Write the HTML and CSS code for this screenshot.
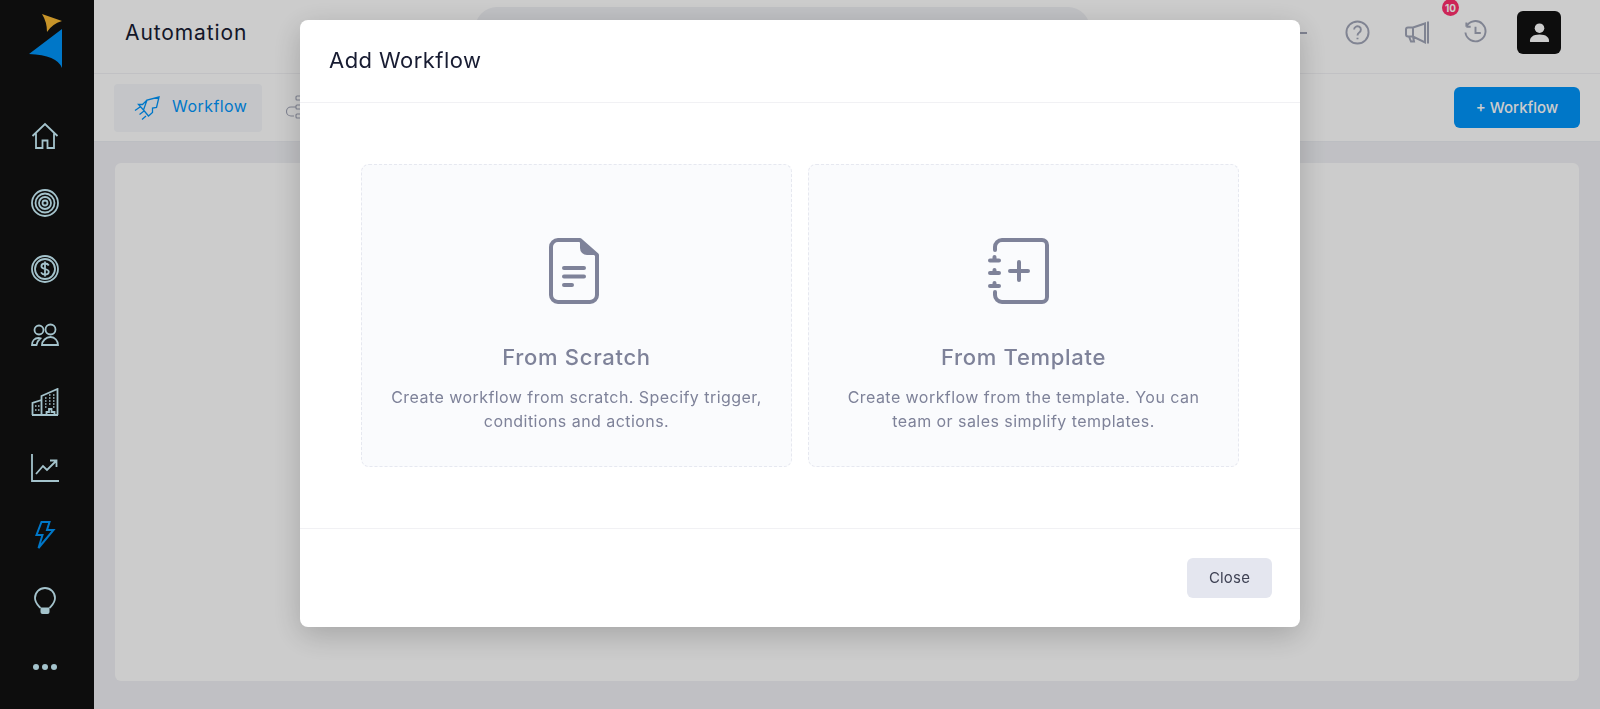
FILE: index.html
```html
<!DOCTYPE html>
<html lang="en">
<head>
<meta charset="utf-8">
<title>Automation</title>
<link rel="stylesheet" href="styles.css">
</head>
<body>
<div class="app">
  <aside class="sidebar">
    <svg class="logo" viewBox="0 0 36 56" width="36" height="56">
      <path class="logo-gold" d="M14 1 L34 8 Q24 11 19 19 Q19 9 14 1Z"/>
      <path class="logo-blue" d="M1 41 L34 16 L34 55 Q29 42 1 41Z"/>
    </svg>
    <nav class="nav">
      <a class="nav-item"><svg class="ico" viewBox="0 0 28 28"><path d="M1.500 14 14 2 26.500 14M5 11.500V26h6.500v-7.500h5V26H23V11.500"/></svg></a>
      <a class="nav-item"><svg class="ico" viewBox="0 0 28 28"><circle cx="14" cy="14" r="13"/><circle cx="14" cy="14" r="9.500"/><circle cx="14" cy="14" r="6"/><circle cx="14" cy="14" r="2.500"/></svg></a>
      <a class="nav-item"><svg class="ico" viewBox="0 0 28 28"><circle cx="14" cy="14" r="13"/><circle cx="14" cy="14" r="10"/><path d="M17.800 10.500C17 9 15.500 8.500 14 8.500c-2 0-3.600 1-3.600 2.700 0 3.600 7.400 2 7.400 5.600 0 1.700-1.700 2.700-3.800 2.700-1.700 0-3.200-.7-4-2.200M14 6.500v15"/></svg></a>
      <a class="nav-item"><svg class="ico" viewBox="0 0 28 22"><circle cx="8" cy="6" r="4.500"/><circle cx="19.500" cy="5.500" r="5"/><path d="M5.500 21H1c0-4 2.500-7 6.500-7 .8 0 1.500.1 2 .3C7.500 16 6 18.500 5.500 21ZM11 21h16c0-4-3-8-7.500-8S11 17 11 21Z"/></svg></a>
      <a class="nav-item"><svg class="ico" viewBox="0 0 28 28"><path d="M1.500 27V15l9-3M10.500 27V8L26.500 1V27M1 27H27M15.500 27v-3h2.500v-3h2.500v3h3v3"/><path class="dots" d="M4 18h1.500M7 18h1.500M4 22h1.500M7 22h1.500M14 10h1.500M18 10h1.500M22 10h1.500M14 13h1.500M18 13h1.500M22 13h1.500M14 16h1.500M18 16h1.500M22 16h1.500M14 19h1.500M22 19h1.500M18 7h1.500M22 7h1.500"/></svg></a>
      <a class="nav-item"><svg class="ico" viewBox="0 0 28 28"><path d="M1 0v27h27"/><path d="M5 20l7-8 4 4 9-9M19 6.500h6.500V13"/></svg></a>
      <a class="nav-item"><svg class="ico bolt" viewBox="0 0 20 28"><path d="M6.500 1h8L12 9h6.500L3.500 27 7.500 14H1.500Z"/></svg></a>
      <a class="nav-item"><svg class="ico" viewBox="0 0 22 28"><path d="M6.500 21C4 18 1 16 1 11 1 5.500 5.500 1 11 1s10 4.500 10 10c0 5-3 7-5.500 10"/><path class="fill" d="M6.500 20.500h9V25a2 2 0 0 1-2 2h-5a2 2 0 0 1-2-2Z"/></svg></a>
      <a class="nav-item"><span class="dot"></span><span class="dot"></span><span class="dot"></span></a>
    </nav>
  </aside>
  <main class="main">
    <header class="topbar">
      <h1 class="page-title">Automation</h1>
      <div class="search"></div>
      <div class="top-actions">
        <span class="dash"></span>
        <svg class="top-ico" viewBox="0 0 26 26"><circle cx="13" cy="13" r="11.500"/><path d="M9.500 10a3.500 3.500 0 1 1 5.300 3c-1.200.8-1.800 1.400-1.800 3M13 18.500v1.500"/></svg>
        <span class="bell">
          <svg class="top-ico" viewBox="0 0 25 24"><path d="M8 7 20 3V22L8 16H3a2 2 0 0 1-2-2V9a2 2 0 0 1 2-2ZM8 7v9M23 1V23M4 16l2 5h3l-1-5"/></svg>
          <span class="badge">10</span>
        </span>
        <svg class="top-ico hist" viewBox="0 0 26 26"><path d="M3.500 7V2.500M3.500 7h4.500M3.500 7A10.500 10.500 0 1 1 2.500 13"/><path d="M13 7v6.500h5.500"/></svg>
        <span class="avatar"><svg viewBox="0 0 24 24" width="23" height="23"><circle cx="12" cy="7.500" r="5"/><path d="M2 21c0-4 3-7 10-7s10 3 10 7c0 .6-.4 1-1 1H3c-.6 0-1-.4-1-1Z"/></svg></span>
      </div>
    </header>
    <div class="subbar">
      <div class="tabs">
        <a class="tab active">
          <svg class="tab-ico" viewBox="0 0 26 26"><path d="M25 2 13 5 8.500 9.500H4.500l5 5.500 5 6 4-3.500v-4.500l4-.5ZM25 2 22.500 12.500M13 5 9.500 15M1 15.500 6 12M5.500 19.500 10 16M8 24.500 12 21"/></svg>
          <span class="tab-label">Workflow</span>
        </a>
        <a class="tab">
          <svg class="tab-ico grey" viewBox="0 0 26 26"><rect x="10" y="1" width="16" height="4" rx="1"/><rect x="10" y="10" width="16" height="4" rx="1"/><rect x="10" y="19" width="16" height="4" rx="1"/><path d="M10 12H5a4 4 0 0 0 0 9h3"/></svg>
        </a>
      </div>
      <button class="add-btn">+ Workflow</button>
    </div>
    <section class="content"><div class="panel"></div></section>
  </main>
</div>

<div class="overlay">
  <div class="modal">
    <div class="modal-header"><h2 class="modal-title">Add Workflow</h2></div>
    <div class="modal-body">
      <div class="option">
        <svg class="opt-ico doc" viewBox="0 0 50 66"><path class="opt-line" d="M31 2H9a7 7 0 0 0-7 7v48a7 7 0 0 0 7 7h32a7 7 0 0 0 7-7V17Z"/><path class="opt-fill" d="M31 2 48 17H38a7 7 0 0 1-7-7Z"/><path class="opt-line" d="M15 30h20M15 38.500h20M15 47h8"/></svg>
        <h3 class="opt-title">From Scratch</h3>
        <p class="opt-desc">Create workflow from scratch. Specify trigger, conditions and actions.</p>
      </div>
      <div class="option">
        <svg class="opt-ico tpl" viewBox="0 0 62 66"><path class="opt-line" d="M7 12V9a7 7 0 0 1 7-7h40a5 5 0 0 1 5 5v52a5 5 0 0 1-5 5H14a7 7 0 0 1-7-7v-3"/><path class="opt-line" d="M2 22.500h9M2 35h9M2 48h9M6.500 19v3M6.500 32v3M6.500 45v3M22 33h18M31 24v18"/></svg>
        <h3 class="opt-title">From Template</h3>
        <p class="opt-desc">Create workflow from the template. You can team or sales simplify templates.</p>
      </div>
    </div>
    <div class="modal-footer"><button class="close-btn">Close</button></div>
  </div>
</div>
</body>
</html>
```
FILE: styles.css
```css
* { box-sizing: border-box; }
html, body { margin: 0; height: 100%; overflow: hidden; }
body { font-family: "Inter", "Liberation Sans", sans-serif; background: #f0f1f5; color: #181c32; }
h1, h2, h3, p { margin: 0; font-weight: 400; }
button { font-family: inherit; border: 0; cursor: pointer; }

.app { display: flex; height: 709px; }

.sidebar { width: 94px; flex: none; background: #111; display: flex; flex-direction: column; align-items: center; padding-top: 13px; }
.logo { margin-left: -2px; flex: none; }
.logo-gold { fill: #f9b934; }
.logo-blue { fill: #0095fa; }
.nav { display: flex; flex-direction: column; align-items: center; margin-top: 34px; }
.nav-item { width: 94px; height: 66.400px; display: flex; align-items: center; justify-content: center; gap: 3px; padding-right: 4px; }
.ico { width: 28px; height: 28px; fill: none; stroke: #cdf4ff; stroke-width: 1.800; }
.ico .dots { stroke-width: 1.500; }
.ico .fill { fill: #cdf4ff; stroke: none; }
.bolt { stroke: #0095fa; stroke-width: 2; }
.dot { width: 6px; height: 6px; border-radius: 50%; background: #cdf4ff; }

.main { flex: 1; min-width: 0; display: flex; flex-direction: column; }
.topbar { height: 74px; flex: none; background: #fff; border-bottom: 1px solid #f2f2f5; display: flex; align-items: center; padding: 0 39px 8px 32px; }
.page-title { font-size: 21px; letter-spacing: .900px; color: #181c32; width: 121px; white-space: nowrap; margin-left: -1px; margin-top: -1px; }
.search { align-self: flex-start; margin: 7px 0 0 229px; width: 615px; height: 44px; background: #f0f1f5; border-radius: 22px; }
.top-actions { margin-left: auto; display: flex; align-items: center; gap: 35px; }
.dash { width: 8px; height: 2px; background: #a1a5b7; margin-right: 3px; }
.top-ico { width: 25px; height: 25px; fill: none; stroke: #a1a5b7; stroke-width: 2; display: block; }
.hist { margin-left: -2px; }
.bell { position: relative; }
.badge { position: absolute; left: 37px; top: -21px; width: 17px; height: 17px; border-radius: 50%; background: #ff2f6d; color: #fff; font-size: 10px; font-weight: 700; display: flex; align-items: center; justify-content: center; }
.avatar { width: 44px; height: 43px; margin-left: -6px; border-radius: 6px; background: #111; display: flex; align-items: center; justify-content: center; }
.avatar svg { fill: #fff; }

.subbar { height: 68px; flex: none; background: #fff; border-bottom: 1px solid #eceef3; display: flex; align-items: center; justify-content: space-between; padding: 0 20px; }
.tabs { display: flex; gap: 10px; }
.tab { height: 48px; padding: 0 15px 0 20px; display: flex; align-items: center; gap: 12px; font-size: 16px; letter-spacing: .450px; color: #0095fa; border-radius: 4px; }
.tab.active { background: #f5f7fa; }
.tab:not(.active) { padding-left: 14px; }
.tab-label { margin-bottom: 3px; }
.tab-ico { width: 26px; height: 26px; fill: none; stroke: #0095fa; stroke-width: 1.300; }
.tab-ico.grey { stroke: #a1a5b7; stroke-width: 1.100; }
.add-btn { height: 41px; width: 126px; background: #0095fa; color: #fff; font-size: 15px; font-weight: 500; border-radius: 6px; }

.content { flex: 1; padding: 21px 21px 28px; background: #f0f1f5; }
.panel { height: 100%; background: #fff; border-radius: 6px; }

.overlay { position: fixed; inset: 0; background: rgba(0, 0, 0, .2); display: flex; justify-content: center; align-items: flex-start; padding-top: 20px; }
.modal { width: 1000px; height: 607px; background: #fff; border-radius: 8px; box-shadow: 0 8px 30px rgba(0, 0, 0, .2); display: flex; flex-direction: column; }
.modal-header { height: 83px; flex: none; border-bottom: 1px solid #f1f1f4; padding: 0 29px 2px; display: flex; align-items: center; }
.modal-title { font-size: 22px; letter-spacing: .450px; color: #181c32; }
.modal-body { flex: 1; display: flex; gap: 16px; padding: 61px 61px 0; }
.option { flex: 1; height: 303px; background: #fafbfd; border: 1px dashed #e6e8f0; border-radius: 8px; display: flex; flex-direction: column; align-items: center; text-align: center; padding: 73px 24px 0; }
.opt-ico { height: 66px; flex: none; }
.doc { width: 50px; margin-right: 5px; }
.tpl { width: 62px; margin-right: 10px; }
.opt-line { fill: none; stroke: #7e8299; stroke-width: 4; stroke-linecap: round; stroke-linejoin: round; }
.opt-fill { fill: #7e8299; }
.opt-title { font-size: 22px; font-weight: 500; letter-spacing: .700px; color: #7e8299; margin-top: 40px; }
.opt-desc { font-size: 16px; letter-spacing: .450px; line-height: 24px; color: #7e8299; margin-top: 15px; }
.modal-footer { height: 99px; flex: none; border-top: 1px solid #f1f1f4; display: flex; align-items: flex-start; justify-content: flex-end; padding: 29px 28px 0; }
.close-btn { width: 85px; height: 40px; padding-bottom: 3px; background: #e4e6ef; color: #3f4254; font-size: 15px; letter-spacing: .200px; border-radius: 6px; }
```
